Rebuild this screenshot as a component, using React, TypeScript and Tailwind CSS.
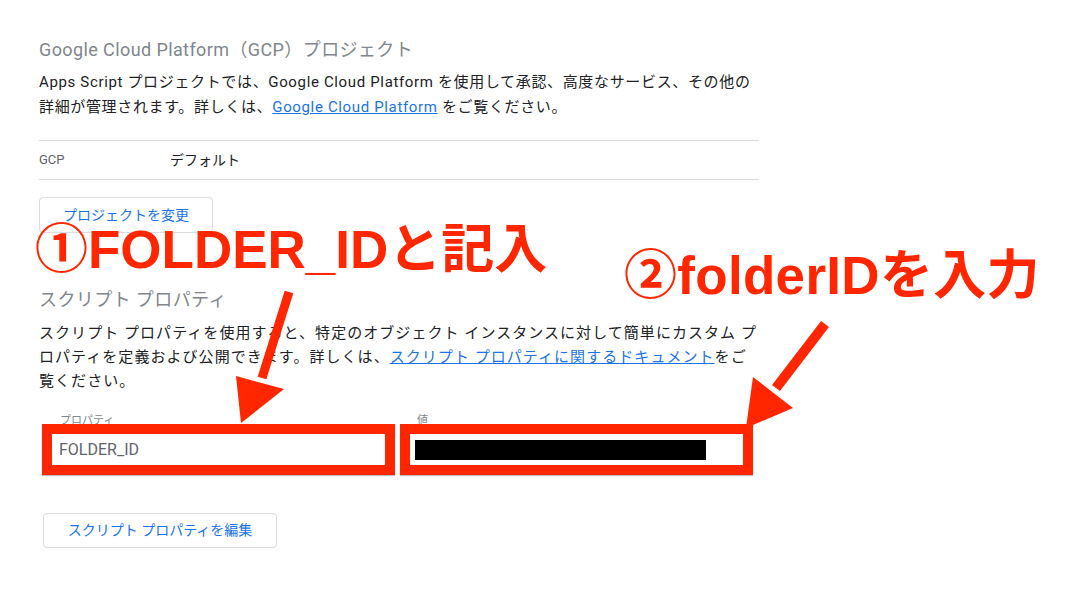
const Arrows = () => (
  <svg
    className="absolute left-0 top-0 pointer-events-none"
    width="1075"
    height="590"
    viewBox="0 0 1075 590"
  >
    <line x1="289" y1="292" x2="262" y2="378" stroke="#ff2600" strokeWidth="9" />
    <polygon points="236,376 284,389 241,423" fill="#ff2600" />
    <line x1="825" y1="324" x2="776" y2="388" stroke="#ff2600" strokeWidth="10" />
    <polygon points="753,377 793,408 746,428" fill="#ff2600" />
  </svg>
);

export default function App() {
  return (
    <div className="relative w-[1075px] h-[590px] overflow-hidden bg-white font-['Roboto','Noto_Sans_CJK_JP',sans-serif]">
      <div className="w-[759px] pl-[39px] pt-[38px]">
        <h2 className="text-[18px] leading-6 tracking-[0.4px] text-[#80868b]">
          Google Cloud Platform（GCP）プロジェクト
        </h2>
        <p className="mt-2 whitespace-nowrap text-[15px] leading-[25px] tracking-[0.65px] text-[#202124]">
          Apps Script プロジェクトでは、Google Cloud Platform を使用して承認、高度なサービス、その他の
          <br />
          詳細が管理されます。詳しくは、
          <a className="text-[#1a73e8] underline">Google Cloud Platform</a> をご覧ください。
        </p>

        <div className="mt-5 flex h-[40px] items-center border-y border-[#dadce0]">
          <span className="w-[131px] text-[13px] text-[#5f6368]">GCP</span>
          <span className="text-[14px] text-[#202124]">デフォルト</span>
        </div>

        <button className="mt-[17px] h-9 w-[174px] rounded border border-[#dadce0] text-[14px] text-[#1a73e8]">
          プロジェクトを変更
        </button>

        <h2 className="mt-[55px] text-[18px] leading-6 tracking-[0.4px] text-[#80868b]">スクリプト プロパティ</h2>
        <p className="mt-[9px] whitespace-nowrap text-[15px] leading-6 tracking-[1.05px] text-[#202124]">
          スクリプト プロパティを使用すると、特定のオブジェクト インスタンスに対して簡単にカスタム プ
          <br />
          ロパティを定義および公開できます。詳しくは、
          <a className="text-[#1a73e8] underline">スクリプト プロパティに関するドキュメント</a>をご
          <br />
          覧ください。
        </p>

        <div className="ml-[3px] mt-[21px] flex gap-[5px]">
          <div className="w-[353px]">
            <div className="h-[12px] pl-[18px] text-[11px] leading-[14px] text-[#80868b]">プロパティ</div>
            <div className="relative -mt-[2px] flex h-[51px] items-center border-[10px] border-[#ff2600] bg-white pl-[7px] text-[16px] text-[#5f6368] shadow-[0_1px_1px_rgba(0,0,0,0.25)]">
              FOLDER_ID
            </div>
          </div>
          <div className="w-[353px]">
            <div className="h-[12px] pl-[17px] text-[11px] leading-[14px] text-[#80868b]">値</div>
            <div className="relative -mt-[2px] flex h-[51px] items-center border-[10px] border-[#ff2600] bg-white pl-[5px] shadow-[0_1px_1px_rgba(0,0,0,0.25)]">
              <div className="h-5 w-[291px] bg-black" />
            </div>
          </div>
        </div>

        <button className="ml-[4px] mt-[38px] h-[35px] w-[234px] rounded border border-[#dadce0] text-[14px] text-[#1a73e8]">
          スクリプト プロパティを編集
        </button>
      </div>

      <div className="absolute left-[35px] top-[223px] whitespace-nowrap font-['Liberation_Sans','Noto_Sans_CJK_JP',sans-serif] text-[53px] font-bold leading-none text-[#ff2600]">
        ①FOLDER_IDと記入
      </div>
      <div className="absolute left-[624px] top-[249px] whitespace-nowrap font-['Liberation_Sans','Noto_Sans_CJK_JP',sans-serif] text-[53px] font-bold leading-none tracking-[0.3px] text-[#ff2600]">
        ②folderIDを入力
      </div>

      <Arrows />
    </div>
  );
}
